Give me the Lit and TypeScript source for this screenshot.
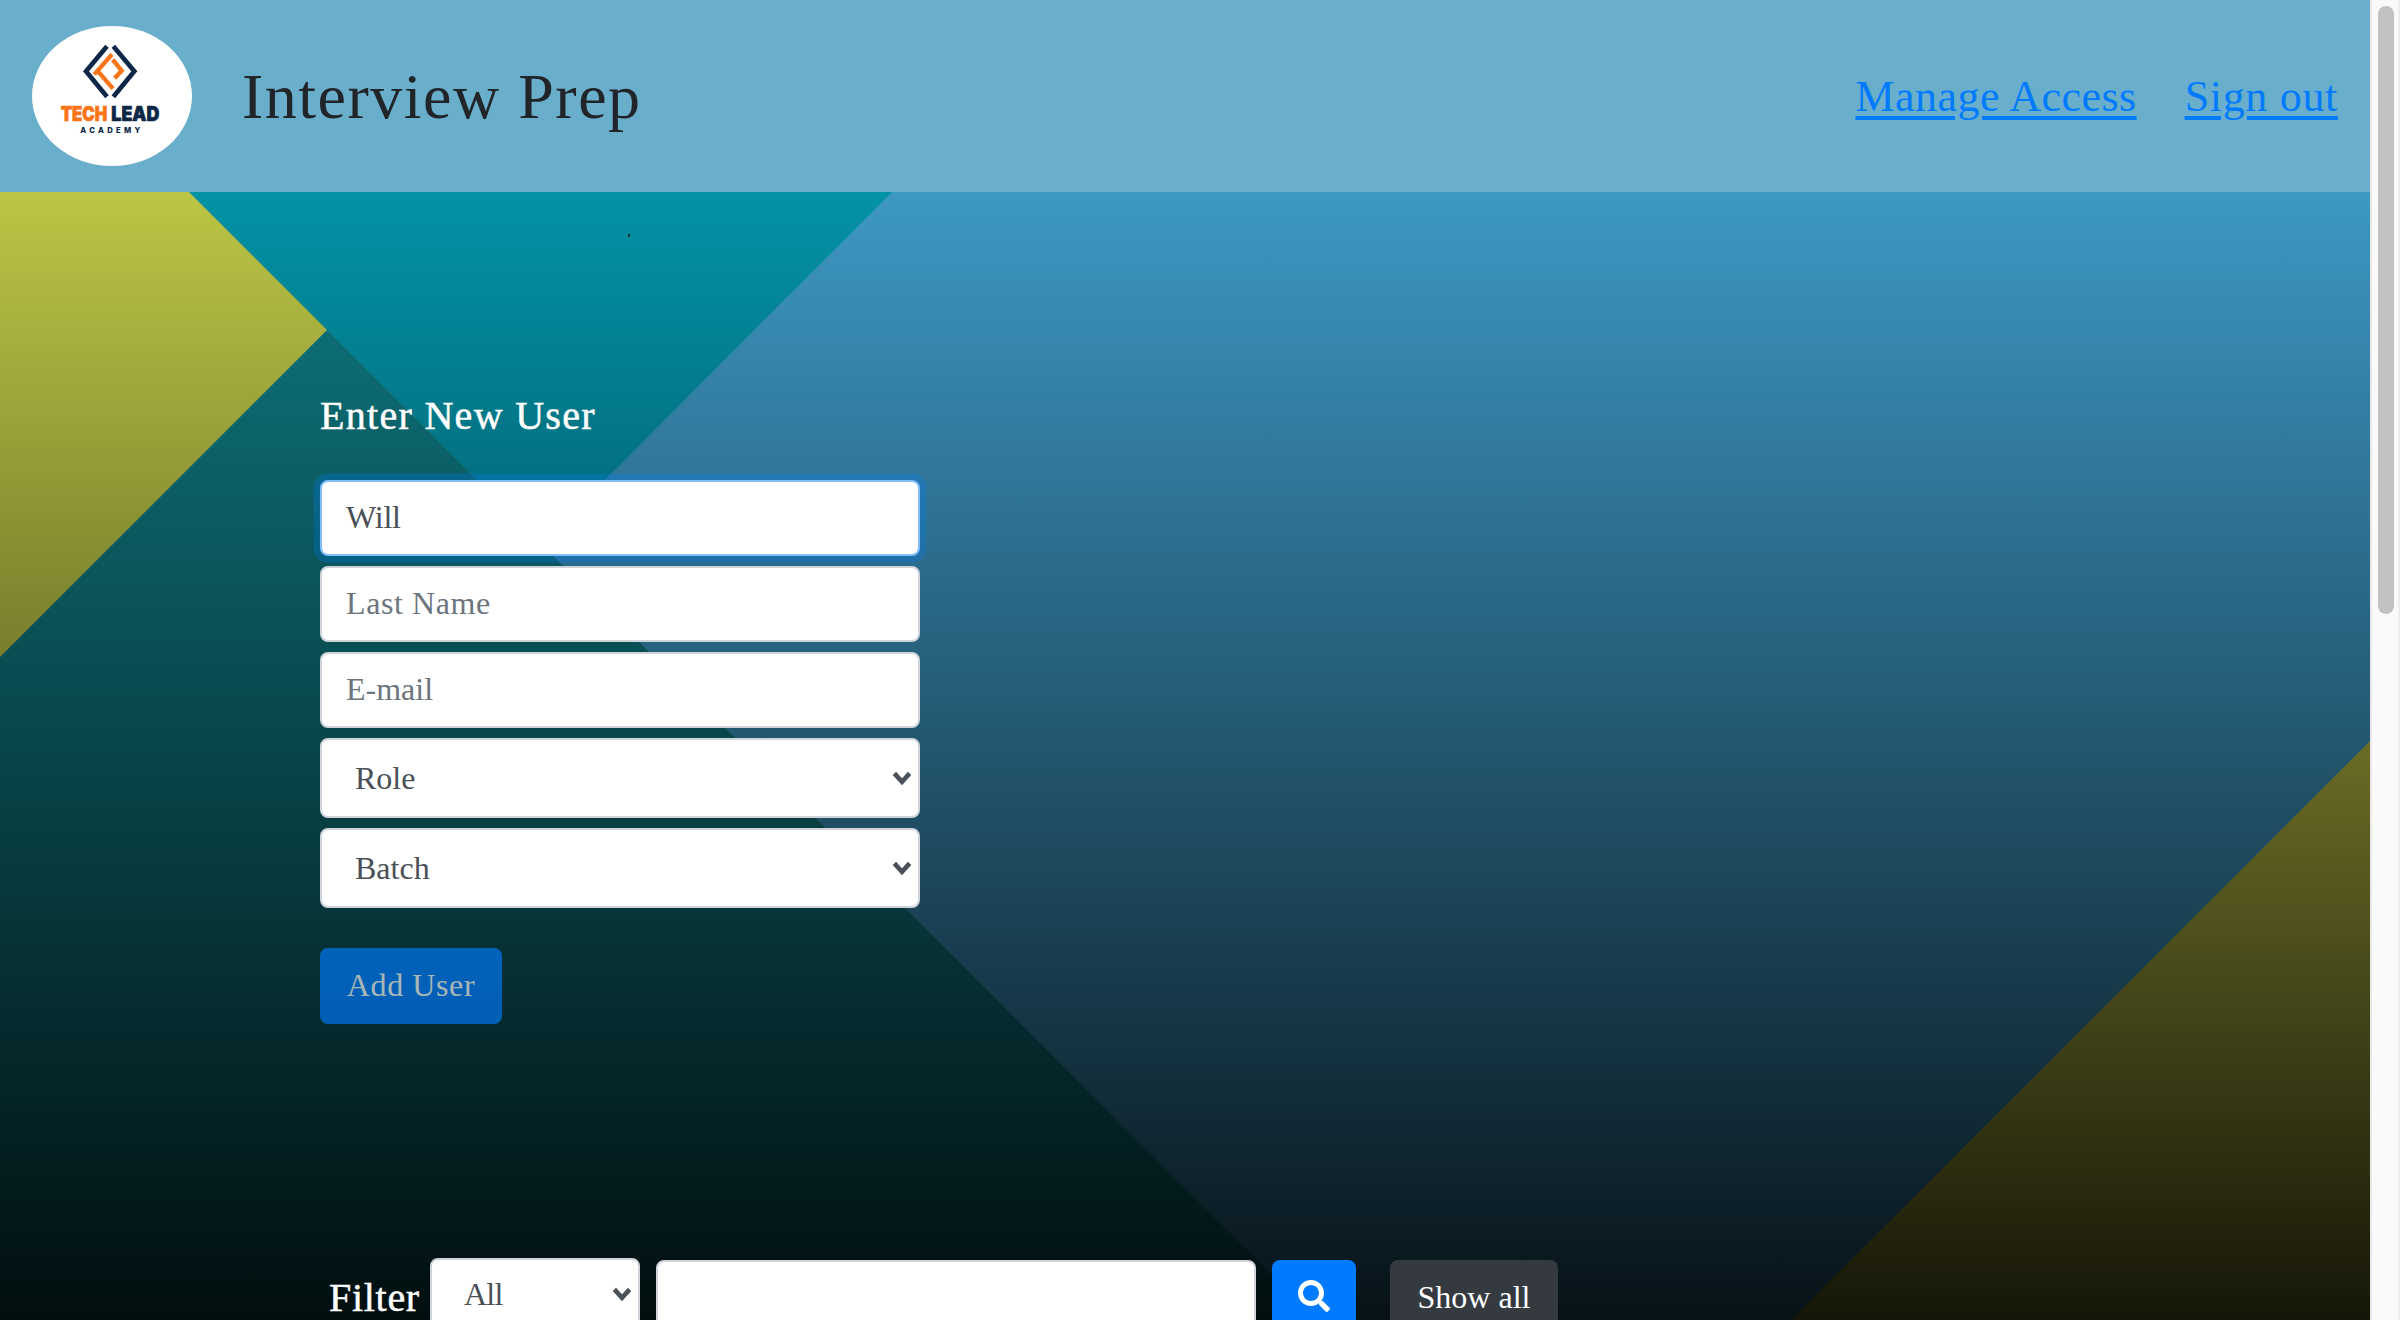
import { LitElement, html, css, svg } from "lit";
import { customElement, property } from "lit/decorators.js";

@customElement("brand-logo")
class BrandLogo extends LitElement {
  static styles = css`
    :host { display: block; width: 160px; height: 140px; }
    .logo { display: block; width: 160px; height: 140px; border-radius: 50%; background: #fff; }
    .navy { stroke: #0e2747; fill: none; stroke-width: 14; }
    .orange { stroke: #fb7417; fill: none; stroke-width: 13; }
    .word { font-family: Inter, sans-serif; font-weight: 900; font-size: 59px; stroke-width: 2; }
    .sub { font-family: Inter, sans-serif; font-weight: 800; font-size: 23px; fill: #0e2747; }
    .fill-orange { fill: #fb7417; stroke: #fb7417; }
    .fill-navy { fill: #0e2747; stroke: #0e2747; }
  `;
  render() {
    return html`<svg class="logo" viewBox="36 33 480 420" role="img" aria-label="Tech Lead Academy">
      <path class="navy" d="M261 94 L198 169 L261 245" />
      <path class="navy" d="M280 94 L343 169 L280 245" />
      <path class="orange" d="M276 118 L223 178 M234 169 L279 221" />
      <path class="orange" d="M278 134 L305 167 L284 190" />
      <text class="word fill-orange" x="122" y="317" textLength="140" lengthAdjust="spacingAndGlyphs">TECH</text>
      <text class="word fill-navy" x="274" y="317" textLength="144" lengthAdjust="spacingAndGlyphs">LEAD</text>
      <text class="sub" x="181" y="354" textLength="180">ACADEMY</text>
    </svg>`;
  }
}

@customElement("select-field")
class SelectField extends LitElement {
  @property() label = "";
  @property({ type: Boolean, reflect: true }) compact = false;
  static styles = css`
    :host { display: block; width: 600px; height: 80px; }
    :host([compact]) { width: 210px; height: 72px; }
    .field { display: grid; width: 100%; height: 100%; align-items: center; }
    .control {
      grid-area: 1 / 1; box-sizing: border-box; width: 100%; height: 100%; margin: 0;
      padding: 0 40px 1px 33px; border: 2px solid #ced4da; border-radius: 8px;
      appearance: none; background: #fff; color: #495057;
      font: 32px "Liberation Serif", serif;
    }
    :host([compact]) .control { padding-left: 32px; letter-spacing: -0.8px; }
    .chevron { grid-area: 1 / 1; justify-self: end; margin-right: 8px; width: 20px; height: 14px; fill: none; stroke: #495057; stroke-width: 4.6; }
  `;
  render() {
    return html`<div class="field">
      <select class="control"><option>${this.label}</option></select>
      <svg class="chevron" viewBox="0 0 20 14"><path d="M2.400 2.400 L10 10.800 L17.600 2.400" /></svg>
    </div>`;
  }
}

const searchGlyph = svg`<path d="M505 442.7L405.300 343c-4.500-4.500-10.600-7-17-7H372c27.600-35.300 44-79.700 44-128C416 93.100 322.900 0 208 0S0 93.100 0 208s93.100 208 208 208c48.300 0 92.700-16.400 128-44v16.300c0 6.400 2.500 12.500 7 17l99.700 99.700c9.400 9.400 24.600 9.400 33.900 0l28.300-28.300c9.400-9.400 9.400-24.600.1-34zM208 336c-70.700 0-128-57.200-128-128 0-70.700 57.200-128 128-128 70.700 0 128 57.200 128 128 0 70.700-57.200 128-128 128z"/>`;

@customElement("app-root")
class AppRoot extends LitElement {
  static styles = css`
    :host { display: block; font-family: "Liberation Serif", serif; }
    .window { display: flex; width: 2400px; height: 1320px; overflow: hidden; }
    .page { width: 2370px; height: 1320px; display: flex; flex-direction: column; }
    .header {
      box-sizing: border-box; height: 192px; flex: none; display: flex; align-items: center;
      padding: 0 32px; background: #69aecb;
    }
    .title { margin: 1px 0 0 50px; font-size: 64px; font-weight: 400; letter-spacing: 1.5px; color: #212529; }
    .nav { display: flex; gap: 48px; margin: 0 0 0 auto; }
    .link {
      font-size: 44px; letter-spacing: 0.48px; color: #007bff; text-decoration: underline;
      text-decoration-thickness: 4px; text-underline-offset: 5px;
    }
    .link.out { letter-spacing: 0.68px; }
    .main { position: relative; flex: 1; height: 1128px; display: flex; flex-direction: column; }
    .backdrop { position: absolute; inset: 0; width: 2370px; height: 1128px; }
    .speck { position: absolute; left: 628px; top: 42px; width: 2px; height: 3px; background: #12333a; }
    .form { position: relative; display: flex; flex-direction: column; align-items: flex-start; gap: 10px; padding: 201px 0 0 320px; }
    .heading { margin: 0 0 32px; height: 45px; line-height: 45px; font-size: 40px; font-weight: 400; letter-spacing: 1.3px; color: #fff; -webkit-text-stroke: 0.5px #fff; }
    .input {
      box-sizing: border-box; width: 600px; height: 76px; margin: 0; padding: 0 24px 1px;
      border: 2px solid #ced4da; border-radius: 8px; background: #fff; color: #495057;
      font: 32px "Liberation Serif", serif; outline: none; position: relative;
    }
    .input::placeholder { color: #6c757d; opacity: 1; }
    .input.active { border-color: #80bdff; box-shadow: 0 0 0 6.4px rgba(0, 123, 255, 0.25); letter-spacing: -0.2px; }
    .input.last { letter-spacing: 0.6px; }
    .button {
      box-sizing: border-box; height: 76px; margin: 0; padding: 0 0 1px; border: 0; border-radius: 8px;
      color: #fff; font: 32px "Liberation Serif", serif; display: grid; place-items: center;
    }
    .button.add { width: 182px; margin-top: 30px; background: #007bff; opacity: 0.65; letter-spacing: 0.6px; }
    .button.search { width: 84px; background: #007bff; margin-left: 16px; padding-bottom: 4px; }
    .button.all { width: 168px; background: #343a40; margin-left: 34px; }
    .glyph { width: 32px; height: 32px; fill: #fff; }
    .filter { position: relative; display: flex; align-items: flex-start; margin-top: 234px; padding-left: 329px; }
    .caption { width: 101px; height: 45px; line-height: 45px; margin-top: 17px; font-size: 40px; letter-spacing: 0.7px; color: #fff; -webkit-text-stroke: 0.5px #fff; }
    .query { margin: 2px 0 0 16px; }
    .filter .button { margin-top: 2px; }
    .scrollbar {
      box-sizing: border-box; width: 30px; height: 1320px; padding: 6px 4px 0 6px;
      border-left: 2px solid #e8e8e8; border-right: 2px solid #ededed; background: #fafafa;
    }
    .thumb { width: 16px; height: 608px; border-radius: 8px; background: #c1c1c1; }
  `;
  render() {
    return html`<div class="window">
      <div class="page">
        <header class="header">
          <brand-logo></brand-logo>
          <h1 class="title">Interview Prep</h1>
          <nav class="nav"><a class="link">Manage Access</a><a class="link out">Sign out</a></nav>
        </header>
        <main class="main">
          <svg class="backdrop" viewBox="0 192 2370 1128">
            <defs>
              <linearGradient id="shade" x1="0" y1="0" x2="0" y2="1">
                <stop offset="0" stop-color="#000" stop-opacity="0" />
                <stop offset="1" stop-color="#000" stop-opacity="0.885" />
              </linearGradient>
            </defs>
            <rect x="0" y="192" width="2370" height="1128" fill="#3d98c4" />
            <path d="M189 192 H892 L541 544 Z" fill="#0392a6" />
            <path d="M0 192 H189 L1317 1320 H0 Z" fill="#0e7a82" />
            <path d="M0 192 H189 L327 330 L0 657 Z" fill="#bcc545" />
            <path d="M2370 741 V1320 H1791 Z" fill="#babd43" />
            <rect x="0" y="192" width="2370" height="1128" fill="url(#shade)" />
          </svg>
          <span class="speck"></span>
          <section class="form">
            <h2 class="heading">Enter New User</h2>
            <input class="input active" .value=${"Will"} />
            <input class="input last" placeholder="Last Name" />
            <input class="input" placeholder="E-mail" />
            <select-field label="Role"></select-field>
            <select-field label="Batch"></select-field>
            <button class="button add">Add User</button>
          </section>
          <section class="filter">
            <span class="caption">Filter</span>
            <select-field compact label="All"></select-field>
            <input class="input query" />
            <button class="button search" aria-label="Search"><svg class="glyph" viewBox="0 0 512 512">${searchGlyph}</svg></button>
            <button class="button all">Show all</button>
          </section>
        </main>
      </div>
      <div class="scrollbar"><div class="thumb"></div></div>
    </div>`;
  }
}
